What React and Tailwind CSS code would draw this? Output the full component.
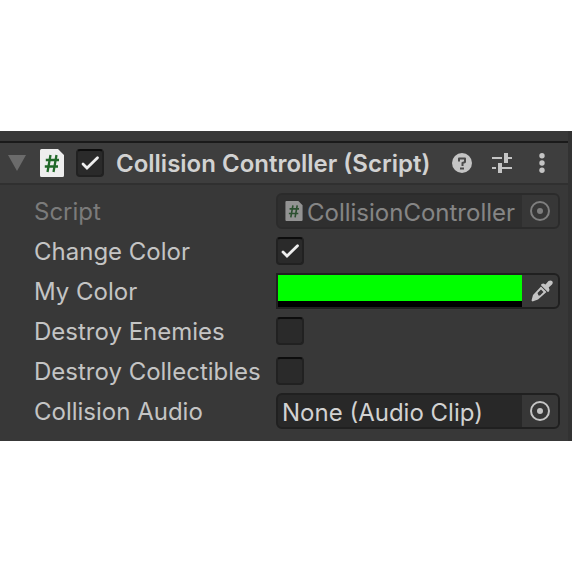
import { useState } from "react";

function ScriptIcon({ className }) {
  return (
    <svg viewBox="0 0 24 28" className={className} aria-hidden="true">
      <path d="M1.500 0H18l6 6v20.500a1.500 1.500 0 0 1-1.500 1.500h-21A1.500 1.500 0 0 1 0 26.500v-25A1.500 1.500 0 0 1 1.500 0Z" fill="#eeeeee" />
      <path d="M10.500 6 7.500 23M16.500 6l-3 17M5.800 11H19M4.800 17.500H18" fill="none" stroke="#22692a" strokeWidth="2.300" />
    </svg>
  );
}

function TargetIcon() {
  return (
    <svg viewBox="0 0 20 20" className="size-5" aria-hidden="true">
      <circle cx="10" cy="10" r="9" fill="none" stroke="#c4c4c4" strokeWidth="2" />
      <circle cx="10" cy="10" r="3" fill="#c4c4c4" />
    </svg>
  );
}

function HelpIcon() {
  return (
    <svg viewBox="0 0 20 20" className="size-5" aria-hidden="true">
      <circle cx="10" cy="10" r="10" fill="#c4c4c4" />
      <path d="M7 8.500V5.500H13V9L10.500 10V13" fill="none" stroke="#4a4a4a" strokeWidth="2" strokeLinejoin="round" />
      <path d="M8 14.500h4v2H8z" fill="#4a4a4a" />
    </svg>
  );
}

function PresetIcon() {
  return (
    <svg viewBox="0 0 20 20" className="size-5" fill="#c4c4c4" aria-hidden="true">
      <path d="M0 4h10v2H0zM12 0h4v4h4v2h-4v4h-4zM0 14h4v2H0zM6 10h4v4h10v2H10v4H6z" />
    </svg>
  );
}

function MoreIcon() {
  return (
    <svg viewBox="0 0 20 20" className="size-5" fill="#c4c4c4" aria-hidden="true">
      <circle cx="10" cy="2.700" r="2.700" />
      <circle cx="10" cy="10" r="2.700" />
      <circle cx="10" cy="17.300" r="2.700" />
    </svg>
  );
}

function EyedropperIcon() {
  return (
    <svg viewBox="0 0 22 22" className="size-[22px]" aria-hidden="true">
      <path
        fillRule="evenodd"
        d="M10 6.500 15.500 12 7 19.500 1.500 21.500 .5 20.500 2 15ZM10 9.500 6.500 13 7.500 15.500 9 15.500 12.500 12Z"
        fill="#c4c4c4"
      />
      <path d="M10.500 4 12.500 3.500 14.500 4.500 17.500 1Q19.500 -.2 21 1T21 4.500L17.700 7.500 18.500 9.500 18 11.500 16.800 12 10 5.200Z" fill="#c4c4c4" />
    </svg>
  );
}

function Checkbox({ id, label, defaultChecked = false }) {
  const [checked, setChecked] = useState(defaultChecked);
  return (
    <span className="grid size-7 shrink-0">
      <input
        id={id}
        type="checkbox"
        aria-label={label}
        checked={checked}
        onChange={(e) => setChecked(e.target.checked)}
        className="col-start-1 row-start-1 size-7 appearance-none rounded border-2 border-[#212121] border-t-[#0d0d0d] bg-[#2a2a2a]"
      />
      {checked && (
        <svg viewBox="0 0 28 28" className="pointer-events-none col-start-1 row-start-1 size-7" aria-hidden="true">
          <path d="m7 15 4 4 10.500-10.300" fill="none" stroke="#eeeeee" strokeWidth="2.800" strokeLinecap="round" />
        </svg>
      )}
    </span>
  );
}

function Row({ id, label, muted = false, children }) {
  return (
    <div className="flex h-10 items-center">
      <label
        htmlFor={id}
        className={`w-[242px] shrink-0 pt-0.5 whitespace-nowrap ${muted ? "text-[#7b7b7b]" : "text-[#c4c4c4]"}`}
      >
        {label}
      </label>
      {children}
    </div>
  );
}

function ObjectField({ id, value, icon = false, disabled = false }) {
  return (
    <div
      className={`flex h-9 min-w-0 flex-1 overflow-hidden rounded-md border-2 border-[#202020] bg-[#282828] ${disabled ? "opacity-50" : ""}`}
    >
      <div className="flex min-w-0 flex-1 items-center pl-1">
        {icon && <ScriptIcon className="mr-1 ml-[3px] h-5 w-[18px] shrink-0" />}
        <input
          id={id}
          type="text"
          readOnly
          disabled={disabled}
          value={value}
          className="h-8 w-full min-w-0 bg-transparent pt-1 text-[#d2d2d2]"
        />
      </div>
      <button
        type="button"
        disabled={disabled}
        aria-label="Select object"
        className="flex w-9 shrink-0 items-center justify-center bg-[#373737]"
      >
        <TargetIcon />
      </button>
    </div>
  );
}

function ColorField({ id }) {
  const [color, setColor] = useState("#00ff00");
  return (
    <div className="flex h-9 min-w-0 flex-1 overflow-hidden rounded-r-md border-2 border-[#202020]">
      <div className="flex min-w-0 flex-1 flex-col bg-black">
        <input
          id={id}
          type="color"
          value={color}
          onChange={(e) => setColor(e.target.value)}
          className="block h-[26px] w-full appearance-none border-0 bg-transparent p-0 [&::-webkit-color-swatch-wrapper]:p-0 [&::-webkit-color-swatch]:rounded-none [&::-webkit-color-swatch]:border-0"
        />
      </div>
      <button
        type="button"
        aria-label="Pick color"
        className="flex w-9 shrink-0 items-center justify-center pl-1"
      >
        <EyedropperIcon />
      </button>
    </div>
  );
}

export default function App() {
  return (
    <div className="flex min-h-screen flex-col justify-center bg-white font-['Inter',sans-serif] text-2xl">
      <main className="border-r-4 border-[#323232] bg-[#383838]">
        <header className="mt-2.5 flex h-11 items-center border-t-2 border-b-2 border-t-[#1a1a1a] border-b-[#303030] bg-[#3e3e3e] pr-4 pl-2">
          <button type="button" aria-label="Collapse component" className="mr-3.5 shrink-0">
            <svg viewBox="0 0 18 16" className="block h-4 w-[18px]" aria-hidden="true">
              <path d="M0 0h18L9 16Z" fill="#6b6b6b" />
            </svg>
          </button>
          <ScriptIcon className="mr-3 h-7 w-6 shrink-0" />
          <Checkbox id="enabled" label="Enable component" defaultChecked />
          <h1 className="ml-3 flex-1 pt-0.5 font-semibold whitespace-nowrap text-[#d2d2d2]">
            Collision Controller (Script)
          </h1>
          <div className="flex shrink-0 gap-5">
            <button type="button" aria-label="Help"><HelpIcon /></button>
            <button type="button" aria-label="Presets"><PresetIcon /></button>
            <button type="button" aria-label="More options"><MoreIcon /></button>
          </div>
        </header>
        <form className="pt-1.5 pr-2 pb-2.5 pl-[34px]">
          <Row id="script" label="Script" muted>
            <ObjectField id="script" value="CollisionController" icon disabled />
          </Row>
          <Row id="change-color" label="Change Color">
            <Checkbox id="change-color" defaultChecked />
          </Row>
          <Row id="my-color" label="My Color">
            <ColorField id="my-color" />
          </Row>
          <Row id="destroy-enemies" label="Destroy Enemies">
            <Checkbox id="destroy-enemies" />
          </Row>
          <Row id="destroy-collectibles" label="Destroy Collectibles">
            <Checkbox id="destroy-collectibles" />
          </Row>
          <Row id="collision-audio" label="Collision Audio">
            <ObjectField id="collision-audio" value="None (Audio Clip)" />
          </Row>
        </form>
      </main>
    </div>
  );
}
